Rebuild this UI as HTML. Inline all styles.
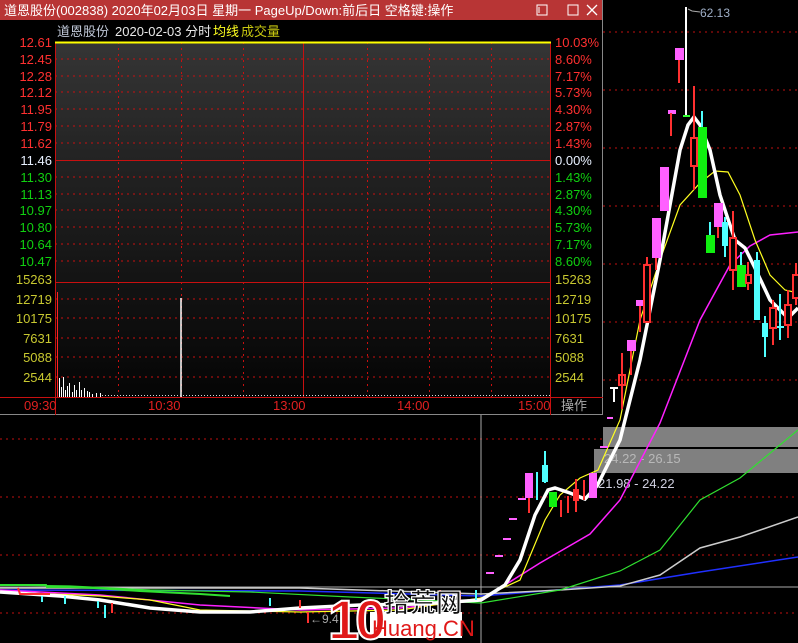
<!DOCTYPE html>
<html><head><meta charset="utf-8"><style>
html,body{margin:0;padding:0;background:#000;width:798px;height:643px;overflow:hidden}
svg{display:block;font-family:"Liberation Sans","Noto Sans CJK SC",sans-serif}
</style></head><body>
<svg width="798" height="643" viewBox="0 0 798 643" xmlns="http://www.w3.org/2000/svg">
<defs><linearGradient id="bg" x1="0" y1="0" x2="0" y2="1">
<stop offset="0" stop-color="#353535"/><stop offset="0.35" stop-color="#222"/><stop offset="1" stop-color="#050505"/></linearGradient></defs>
<rect width="798" height="643" fill="#000"/>
<!-- background chart grid -->
<g stroke="#c01010" stroke-dasharray="2,4" stroke-width="1">
<line x1="603" y1="32" x2="798" y2="32"/><line x1="603" y1="90" x2="798" y2="90"/><line x1="603" y1="148" x2="798" y2="148"/><line x1="603" y1="206" x2="798" y2="206"/><line x1="603" y1="264" x2="798" y2="264"/><line x1="603" y1="322" x2="798" y2="322"/><line x1="603" y1="380" x2="798" y2="380"/>
<line x1="0" y1="439" x2="798" y2="439"/><line x1="0" y1="497" x2="798" y2="497"/><line x1="0" y1="555" x2="798" y2="555"/><line x1="0" y1="613" x2="798" y2="613"/>
</g>
<line x1="0" y1="587" x2="798" y2="587" stroke="#aaa"/>
<line x1="481" y1="415" x2="481" y2="643" stroke="#aaa"/>
<rect x="603" y="427" width="195" height="20" fill="#808080"/>
<rect x="594" y="449" width="204" height="24" fill="#808080"/>
<text x="604" y="463" font-size="13" fill="#b8b8b8">24.22 - 26.15</text>
<text x="598" y="488" font-size="13" fill="#d0d0e0">21.98 - 24.22</text>
<!-- MA lines -->
<g fill="none">
<polyline stroke="#2030ff" stroke-width="1.5" points="0,590 300,591 481,596 620,585 700,572 798,557"/>
<polyline stroke="#ccc" stroke-width="1.5" points="0,588 300,588 481,594 560,590 620,586 660,575 700,548 740,537 798,517"/>
<polyline stroke="#30e030" stroke-width="1.2" points="0,585 70,586 150,590 250,592 350,597 420,600 481,603 560,590 620,571 660,550 700,500 740,478 798,430"/>
<polyline stroke="#ff20ff" stroke-width="1.5" points="0,590 100,595 200,605 300,610 400,608 481,600 540,563 590,534 620,500 660,423 700,320 730,265 750,246 770,235 798,232"/>
<polyline stroke="#ffff20" stroke-width="1.2" points="0,592 100,596 150,600 200,610 300,612 400,610 481,598 520,580 545,520 560,495 580,478 598,470 620,420 640,320 660,260 680,205 700,183 715,171 728,172 740,195 755,240 770,275 785,290 798,293"/>
<polyline stroke="#fff" stroke-width="3.5" points="0,592 60,596 100,600 150,608 200,612 250,612 300,608 360,605 420,604 481,600 505,585 520,560 535,515 548,490 555,488 570,493 585,499 597,486 620,440 640,360 660,260 680,150 688,125 694,117 700,125 710,150 720,195 735,240 745,248 755,268 770,300 780,310 788,318 798,308"/>
</g>
<!-- candles right -->
<g stroke-width="2">
<line x1="614" y1="388" x2="614" y2="402" stroke="#fff"/><line x1="610" y1="388" x2="618" y2="388" stroke="#fff"/>
<line x1="622" y1="353" x2="622" y2="409" stroke="#ff3030"/><rect x="619" y="375" width="6" height="10" fill="none" stroke="#ff3030"/>
<rect x="627" y="340" width="9" height="11" fill="#ff60ff" stroke="none"/><line x1="631" y1="351" x2="631" y2="375" stroke="#ff3030"/>
<rect x="636" y="300" width="8" height="6" fill="#ff60ff" stroke="none"/><line x1="640" y1="306" x2="640" y2="332" stroke="#ff3030"/>
<line x1="647" y1="257" x2="647" y2="322" stroke="#ff3030"/><rect x="644" y="265" width="6" height="57" fill="#000" stroke="#ff3030"/>
<rect x="652" y="218" width="9" height="40" fill="#ff60ff" stroke="none"/><line x1="656" y1="258" x2="656" y2="270" stroke="#ff3030"/>
<rect x="660" y="167" width="9" height="44" fill="#ff60ff" stroke="none"/>
<rect x="668" y="110" width="8" height="4" fill="#ff60ff" stroke="none"/><line x1="671" y1="113" x2="671" y2="136" stroke="#ff3030"/>
<rect x="675" y="48" width="9" height="12" fill="#ff60ff" stroke="none"/><line x1="679" y1="60" x2="679" y2="83" stroke="#ff3030"/>
<line x1="686" y1="7" x2="686" y2="116" stroke="#fff"/><line x1="683" y1="116" x2="690" y2="116" stroke="#30ff30"/>
<line x1="694" y1="86" x2="694" y2="190" stroke="#ff3030"/><rect x="691" y="138" width="6" height="28" fill="#000" stroke="#ff3030"/>
<line x1="702" y1="111" x2="702" y2="130" stroke="#50ffff"/><rect x="698" y="127" width="9" height="71" fill="#10f010" stroke="none"/>
<line x1="710" y1="222" x2="710" y2="236" stroke="#50ffff"/><rect x="706" y="235" width="9" height="18" fill="#10f010" stroke="none"/>
<rect x="714" y="203" width="9" height="24" fill="#ff60ff" stroke="none"/><line x1="718" y1="227" x2="718" y2="238" stroke="#ff3030"/>
<line x1="725" y1="217" x2="725" y2="257" stroke="#50ffff"/><rect x="722" y="222" width="6" height="24" fill="#50ffff" stroke="none"/>
<line x1="733" y1="211" x2="733" y2="290" stroke="#ff3030"/><rect x="730" y="238" width="6" height="32" fill="#000" stroke="#ff3030"/>
<line x1="741" y1="252" x2="741" y2="266" stroke="#50ffff"/><rect x="737" y="265" width="9" height="22" fill="#10f010" stroke="none"/>
<line x1="748" y1="262" x2="748" y2="290" stroke="#ff3030"/><rect x="746" y="275" width="5" height="8" fill="#000" stroke="#ff3030"/>
<line x1="757" y1="252" x2="757" y2="320" stroke="#50ffff"/><rect x="754" y="260" width="6" height="60" fill="#50ffff" stroke="none"/>
<line x1="765" y1="316" x2="765" y2="357" stroke="#50ffff"/><rect x="762" y="323" width="6" height="14" fill="#50ffff" stroke="none"/>
<line x1="773" y1="300" x2="773" y2="345" stroke="#ff3030"/><rect x="770" y="308" width="6" height="20" fill="#000" stroke="#ff3030"/>
<line x1="780" y1="294" x2="780" y2="340" stroke="#50ffff"/><line x1="777" y1="327" x2="784" y2="327" stroke="#50ffff"/>
<line x1="788" y1="290" x2="788" y2="338" stroke="#ff3030"/><rect x="785" y="305" width="6" height="20" fill="#000" stroke="#ff3030"/>
<line x1="796" y1="263" x2="796" y2="305" stroke="#ff3030"/><rect x="793" y="275" width="6" height="23" fill="#000" stroke="#ff3030"/>
</g>
<text x="700" y="17" font-size="12" fill="#a0b0c8">62.13</text>
<polyline points="688,9 692,11 700,12" fill="none" stroke="#aaa"/>
<!-- candles bottom -->
<g stroke-width="2">
<line x1="486" y1="573" x2="494" y2="573" stroke="#ff60ff"/><line x1="495" y1="556" x2="503" y2="556" stroke="#ff60ff"/><line x1="503" y1="539" x2="511" y2="539" stroke="#ff60ff"/><line x1="509" y1="519" x2="517" y2="519" stroke="#ff60ff"/><line x1="518" y1="499" x2="526" y2="499" stroke="#ff60ff"/><line x1="600" y1="447" x2="608" y2="447" stroke="#ff60ff"/><line x1="607" y1="418" x2="613" y2="418" stroke="#ff60ff"/>
<rect x="525" y="473" width="8" height="25" fill="#ff60ff" stroke="none"/><line x1="529" y1="498" x2="529" y2="513" stroke="#ff3030"/>
<line x1="537" y1="472" x2="537" y2="500" stroke="#50ffff"/>
<line x1="545" y1="451" x2="545" y2="483" stroke="#50ffff"/><rect x="542" y="465" width="6" height="17" fill="#50ffff" stroke="none"/>
<rect x="549" y="492" width="8" height="15" fill="#10f010" stroke="none"/>
<line x1="561" y1="500" x2="561" y2="517" stroke="#ff3030"/><line x1="568" y1="496" x2="568" y2="513" stroke="#ff3030"/><line x1="576" y1="479" x2="576" y2="512" stroke="#ff3030"/><rect x="574" y="490" width="4" height="10" fill="none" stroke="#ff3030"/><line x1="584" y1="480" x2="584" y2="500" stroke="#ff3030"/>
<rect x="589" y="473" width="8" height="25" fill="#ff60ff" stroke="none"/>
</g>
<!-- bottom left clutter -->
<g stroke-width="2">
<polyline fill="none" stroke="#30e030" points="0,585 46,585 47,587 70,587 94,588 110,589 140,591 160,592 180,593 200,594 230,596"/>
<polyline fill="none" stroke="#ff3030" points="18,588 20,594 50,594"/>
<line x1="42" y1="596" x2="42" y2="602" stroke="#50ffff"/><line x1="65" y1="596" x2="65" y2="604" stroke="#50ffff"/><line x1="98" y1="601" x2="98" y2="608" stroke="#50ffff"/><line x1="105" y1="605" x2="105" y2="618" stroke="#50ffff"/><line x1="112" y1="603" x2="112" y2="613" stroke="#ff3030"/>
<line x1="308" y1="612" x2="308" y2="623" stroke="#ff3030"/><line x1="300" y1="600" x2="300" y2="608" stroke="#ff3030"/><line x1="270" y1="598" x2="270" y2="606" stroke="#50ffff"/>
<line x1="440" y1="590" x2="440" y2="600" stroke="#ff3030"/><line x1="460" y1="592" x2="460" y2="600" stroke="#ff3030"/><line x1="476" y1="590" x2="476" y2="600" stroke="#50ffff"/>
</g>
<text x="310" y="623" font-size="12" fill="#aaa">←9.4</text>
<!-- logo -->
<rect x="370" y="612" width="92" height="26" fill="#fff"/>
<text x="328" y="639" font-size="56" font-weight="bold" fill="#e01818" stroke="#fff" stroke-width="2" letter-spacing="-4">10</text>
<text x="384" y="612" font-size="26" fill="#111" stroke="#fff" stroke-width="1.2" font-weight="bold">拾荒网</text>
<text x="372" y="636" font-size="22" fill="#e01818">Huang.CN</text>
<!-- popup -->
<rect x="0" y="0" width="603" height="415" fill="#000"/>
<line x1="602.5" y1="0" x2="602.5" y2="415" stroke="#888"/>
<line x1="0" y1="414.5" x2="603" y2="414.5" stroke="#888"/>
<rect x="0" y="0" width="602" height="20" fill="#b83535"/>
<text x="4" y="15" font-size="13" fill="#fff">道恩股份(002838) 2020年02月03日 星期一 PageUp/Down:前后日 空格键:操作</text>
<rect x="537" y="5" width="10" height="10" fill="none" stroke="#fff"/><line x1="539" y1="7" x2="539" y2="13" stroke="#fff"/>
<rect x="568" y="5" width="10" height="10" fill="none" stroke="#fff"/>
<path d="M587 5 L597 15 M597 5 L587 15" stroke="#fff" stroke-width="1.3"/>
<text x="57" y="36" font-size="13" fill="#c0c8d8">道恩股份</text>
<text x="115" y="36" font-size="13" fill="#e8e8e8">2020-02-03 分时</text>
<text x="213" y="36" font-size="13" fill="#ffff20">均线</text>
<text x="241" y="36" font-size="13" fill="#c8c810">成交量</text>
<rect x="55" y="42" width="496" height="355" fill="url(#bg)"/>
<g stroke="#c81010" stroke-dasharray="2,4">
<line x1="55" y1="59" x2="551" y2="59"/><line x1="55" y1="76" x2="551" y2="76"/><line x1="55" y1="92" x2="551" y2="92"/><line x1="55" y1="109" x2="551" y2="109"/><line x1="55" y1="126" x2="551" y2="126"/><line x1="55" y1="143" x2="551" y2="143"/>
<line x1="55" y1="177" x2="551" y2="177"/><line x1="55" y1="194" x2="551" y2="194"/><line x1="55" y1="210" x2="551" y2="210"/><line x1="55" y1="227" x2="551" y2="227"/><line x1="55" y1="244" x2="551" y2="244"/><line x1="55" y1="261" x2="551" y2="261"/>
<line x1="55" y1="299" x2="551" y2="299"/><line x1="55" y1="318" x2="551" y2="318"/><line x1="55" y1="338" x2="551" y2="338"/><line x1="55" y1="357" x2="551" y2="357"/><line x1="55" y1="377" x2="551" y2="377"/>
<line x1="118.5" y1="42" x2="118.5" y2="397"/><line x1="181.5" y1="42" x2="181.5" y2="397"/><line x1="243.5" y1="42" x2="243.5" y2="397"/><line x1="367.5" y1="42" x2="367.5" y2="397"/><line x1="429.5" y1="42" x2="429.5" y2="397"/><line x1="491.5" y1="42" x2="491.5" y2="397"/>
</g>
<g stroke="#c81010">
<line x1="55" y1="160.5" x2="551" y2="160.5"/><line x1="55" y1="282.5" x2="551" y2="282.5"/><line x1="303.5" y1="42" x2="303.5" y2="397"/>
<line x1="55.5" y1="42" x2="55.5" y2="415"/><line x1="550.5" y1="42" x2="550.5" y2="415"/><line x1="0" y1="397.5" x2="603" y2="397.5"/>
</g>
<line x1="55" y1="42.5" x2="551" y2="42.5" stroke="#ffff00" stroke-width="2"/>
<!-- volume bars -->
<line x1="57.5" y1="292" x2="57.5" y2="397" stroke="#ff2020"/>
<line x1="181" y1="298" x2="181" y2="397" stroke="#fff" stroke-width="1.5"/>
<g stroke="#fff">
<line x1="59.5" y1="378" x2="59.5" y2="397"/><line x1="61.5" y1="387" x2="61.5" y2="397"/><line x1="63.5" y1="377" x2="63.5" y2="397"/><line x1="65.5" y1="390" x2="65.5" y2="397"/><line x1="67.5" y1="386" x2="67.5" y2="397"/><line x1="69.5" y1="383" x2="69.5" y2="397"/><line x1="72.5" y1="392" x2="72.5" y2="397"/><line x1="74.5" y1="385" x2="74.5" y2="397"/><line x1="76.5" y1="390" x2="76.5" y2="397"/><line x1="79.5" y1="382" x2="79.5" y2="397"/><line x1="81.5" y1="390" x2="81.5" y2="397"/><line x1="84.5" y1="388" x2="84.5" y2="397"/><line x1="87.5" y1="391" x2="87.5" y2="397"/><line x1="89.5" y1="392" x2="89.5" y2="397"/><line x1="92.5" y1="394" x2="92.5" y2="397"/><line x1="96.5" y1="393" x2="96.5" y2="397"/><line x1="100.5" y1="393" x2="100.5" y2="397"/>
</g>
<g stroke="#ddd" stroke-dasharray="1,2"><line x1="102" y1="395.5" x2="550" y2="395.5"/></g>
<g font-size="13" text-anchor="end">
<text x="52" y="47" fill="#ff3030">12.61</text><text x="52" y="64" fill="#ff3030">12.45</text><text x="52" y="81" fill="#ff3030">12.28</text><text x="52" y="97" fill="#ff3030">12.12</text><text x="52" y="114" fill="#ff3030">11.95</text><text x="52" y="131" fill="#ff3030">11.79</text><text x="52" y="148" fill="#ff3030">11.62</text>
<text x="52" y="165" fill="#e8f0ff">11.46</text>
<text x="52" y="182" fill="#10d010">11.30</text><text x="52" y="199" fill="#10d010">11.13</text><text x="52" y="215" fill="#10d010">10.97</text><text x="52" y="232" fill="#10d010">10.80</text><text x="52" y="249" fill="#10d010">10.64</text><text x="52" y="266" fill="#10d010">10.47</text>
<g fill="#c8c830"><text x="52" y="284">15263</text><text x="52" y="304">12719</text><text x="52" y="323">10175</text><text x="52" y="343">7631</text><text x="52" y="362">5088</text><text x="52" y="382">2544</text></g>
</g>
<g font-size="13">
<text x="555" y="47" fill="#ff3030">10.03%</text><text x="555" y="64" fill="#ff3030">8.60%</text><text x="555" y="81" fill="#ff3030">7.17%</text><text x="555" y="97" fill="#ff3030">5.73%</text><text x="555" y="114" fill="#ff3030">4.30%</text><text x="555" y="131" fill="#ff3030">2.87%</text><text x="555" y="148" fill="#ff3030">1.43%</text>
<text x="555" y="165" fill="#e8f0ff">0.00%</text>
<text x="555" y="182" fill="#10d010">1.43%</text><text x="555" y="199" fill="#10d010">2.87%</text><text x="555" y="215" fill="#10d010">4.30%</text><text x="555" y="232" fill="#10d010">5.73%</text><text x="555" y="249" fill="#10d010">7.17%</text><text x="555" y="266" fill="#10d010">8.60%</text>
<g fill="#c8c830"><text x="555" y="284">15263</text><text x="555" y="304">12719</text><text x="555" y="323">10175</text><text x="555" y="343">7631</text><text x="555" y="362">5088</text><text x="555" y="382">2544</text></g>
<g fill="#e02020"><text x="24" y="410">09:30</text><text x="148" y="410">10:30</text><text x="273" y="410">13:00</text><text x="397" y="410">14:00</text><text x="518" y="410">15:00</text></g>
<text x="561" y="410" fill="#aaa">操作</text>
</g>
</svg>
</body></html>
